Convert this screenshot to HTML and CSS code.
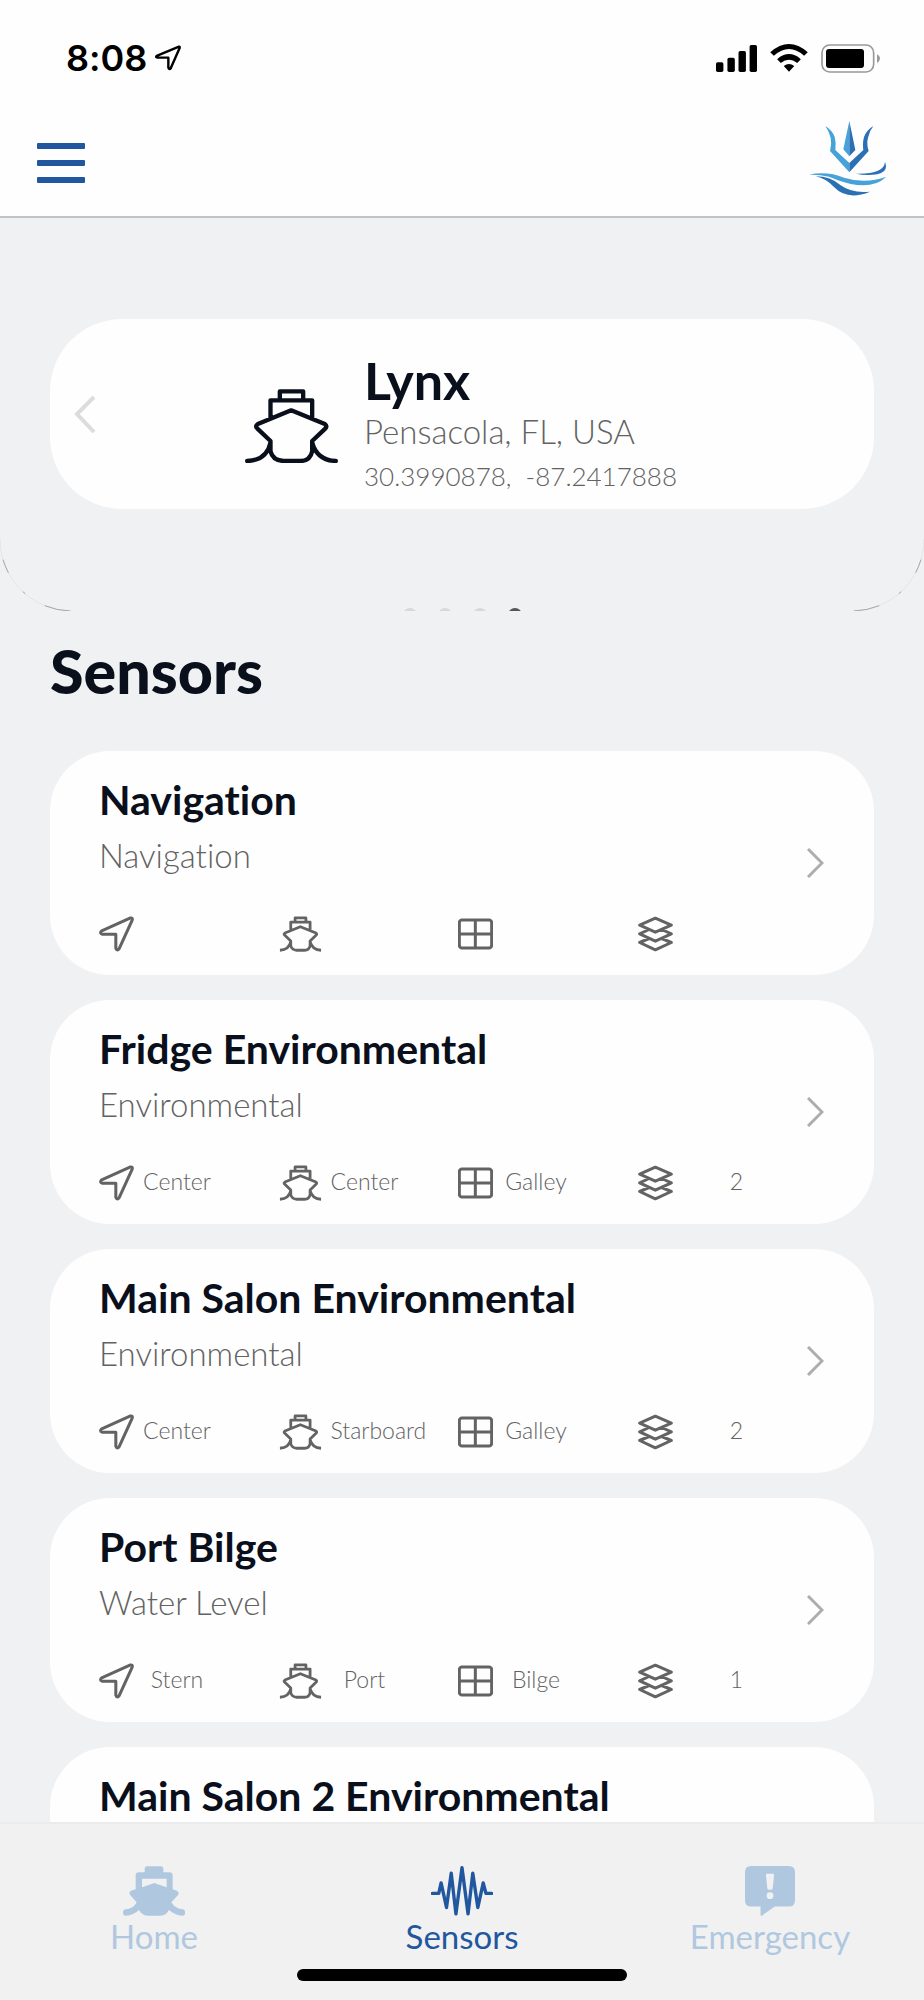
FILE: index.html
```
<!DOCTYPE html>
<html lang="en">
<head>
    <meta charset="UTF-8">
    <meta name="viewport" content="width=device-width, initial-scale=1.0">
    <title>Sensors</title>

    <link rel="stylesheet" href="styles.css">
</head>
<body>
    <!-- Shared icons -->
    <svg class="sprite" aria-hidden="true">
        <symbol id="ship" viewBox="0 0 278 222">
            <path d="M104 30V7H174V30M76 87V34H201V87M138 64L239 105Q247 111 241 118L201 156V187Q195 216 165 216H115Q83 214 76 187V156L36 118Q29 111 38 105ZM76 160Q65 214 6 216M201 160Q215 214 272 216"/>
        </symbol>
        <symbol id="arrow" viewBox="0 0 104 105">
            <path d="M92 5Q102 3 98 13L60 96Q54 105 50 95V53H9Q1 50 8 43Z"/>
        </symbol>
        <symbol id="room" viewBox="0 0 105 92">
            <rect x="4" y="4" width="97" height="84" rx="8"/>
            <path d="M52 4V88M4 46H101"/>
        </symbol>
        <symbol id="layers" viewBox="0 0 105 105">
            <path d="M52 5L100 26L52 47L5 26ZM33 39L5 52L52 74L100 52L71 39M33 66L5 78L52 100L100 78L71 66"/>
        </symbol>
        <symbol id="chevron" viewBox="0 0 17 30">
            <path d="M1 1L15 15L1 29"/>
        </symbol>
    </svg>

    <div class="status-bar">
        <span class="time">8:08</span>
        <svg class="location" viewBox="0 0 76 76"><path d="M70 5L5 32Q1 36 7 37H39V66Q42 74 46 68L72 9Q73 4 70 5Z"/></svg>
        <div class="status-icons">
            <svg width="41" height="27" viewBox="0 0 122 80"><rect y="51" width="22" height="29" rx="5"/><rect x="34" y="38" width="22" height="42" rx="5"/><rect x="67" y="18" width="22" height="62" rx="5"/><rect x="100" width="22" height="80" rx="5"/></svg>
            <svg width="38" height="28" viewBox="0 0 114 85"><path d="M0 25Q57 -25 114 25L103 36Q57 -5 11 36ZM21 46Q57 15 93 46L82 58Q57 37 32 58ZM41 67Q57 55 73 67L57 84Z"/></svg>
            <svg width="59" height="29" viewBox="0 0 177 87"><rect class="battery-case" x="3" y="3" width="155" height="81" rx="23"/><rect x="15" y="15" width="114" height="57" rx="9"/><path class="battery-cap" d="M168 31Q177 35 177 43Q177 52 168 57Z"/></svg>
        </div>
    </div>

    <header>
        <button class="menu-button" aria-label="Menu"><span></span><span></span><span></span></button>
        <svg class="logo" viewBox="0 0 234 225">
            <path class="logo-light" d="M121 0L103 85L121 106ZM49 15Q70 28 77 48Q82 66 79 87L121 126V154L63 90Q69 70 65 50Q60 30 49 15ZM0 161Q55 150 105 170Q170 190 232 167Q195 203 125 189Q85 178 60 167Q30 160 0 161Z"/>
            <path class="logo-dark" d="M121 0L139 87L121 106ZM193 15Q172 28 165 48Q160 66 163 87L121 126V154L179 90Q172 70 177 50Q181 30 193 15ZM20 166Q65 166 95 193Q130 218 183 212Q115 240 75 198Q50 172 20 166ZM141 158Q225 160 228 123Q240 152 205 160Q170 165 141 158Z"/>
        </svg>
    </header>

    <main>
        <section class="carousel">
            <div class="vessel">
                <button class="prev" aria-label="Previous vessel"><svg viewBox="0 0 22 39"><path d="M20 2L3 19L20 37"/></svg></button>
                <svg class="vessel-icon"><use href="#ship"/></svg>
                <div class="vessel-info">
                    <h2>Lynx</h2>
                    <p class="place">Pensacola, FL, USA</p>
                    <p class="coords">30.3990878,&nbsp; -87.2417888</p>
                </div>
            </div>
            <svg class="corner left" viewBox="0 0 72 72"><path class="faint" d="M0 0A72 72 0 0 0 72 72"/><path class="streak" d="M0 0A72 72 0 0 0 72 72"/></svg>
            <svg class="corner right" viewBox="0 0 72 72"><path class="faint" d="M72 0A72 72 0 0 1 0 72"/><path class="streak" d="M72 0A72 72 0 0 1 0 72"/></svg>
            <div class="dots"><span></span><span></span><span></span><span class="active"></span></div>
        </section>

        <h1>Sensors</h1>

        <div class="sensor-list">
            <a class="sensor-card" href="#navigation">
                <div class="sensor-body">
                    <h3>Navigation</h3>
                    <p>Navigation</p>
                    <div class="meta">
                        <div><svg class="icon"><use href="#arrow"/></svg></div>
                        <div><svg class="icon icon-ship"><use href="#ship"/></svg></div>
                        <div><svg class="icon"><use href="#room"/></svg></div>
                        <div><svg class="icon"><use href="#layers"/></svg></div>
                    </div>
                </div>
                <svg class="chevron"><use href="#chevron"/></svg>
            </a>

            <a class="sensor-card" href="#fridge">
                <div class="sensor-body">
                    <h3>Fridge Environmental</h3>
                    <p>Environmental</p>
                    <div class="meta">
                        <div><svg class="icon"><use href="#arrow"/></svg><span>Center</span></div>
                        <div><svg class="icon icon-ship"><use href="#ship"/></svg><span>Center</span></div>
                        <div><svg class="icon"><use href="#room"/></svg><span>Galley</span></div>
                        <div><svg class="icon"><use href="#layers"/></svg><span class="level">2</span></div>
                    </div>
                </div>
                <svg class="chevron"><use href="#chevron"/></svg>
            </a>

            <a class="sensor-card" href="#main-salon">
                <div class="sensor-body">
                    <h3>Main Salon Environmental</h3>
                    <p>Environmental</p>
                    <div class="meta">
                        <div><svg class="icon"><use href="#arrow"/></svg><span>Center</span></div>
                        <div><svg class="icon icon-ship"><use href="#ship"/></svg><span>Starboard</span></div>
                        <div><svg class="icon"><use href="#room"/></svg><span>Galley</span></div>
                        <div><svg class="icon"><use href="#layers"/></svg><span class="level">2</span></div>
                    </div>
                </div>
                <svg class="chevron"><use href="#chevron"/></svg>
            </a>

            <a class="sensor-card" href="#port-bilge">
                <div class="sensor-body">
                    <h3>Port Bilge</h3>
                    <p>Water Level</p>
                    <div class="meta">
                        <div><svg class="icon"><use href="#arrow"/></svg><span>Stern</span></div>
                        <div><svg class="icon icon-ship"><use href="#ship"/></svg><span>Port</span></div>
                        <div><svg class="icon"><use href="#room"/></svg><span>Bilge</span></div>
                        <div><svg class="icon"><use href="#layers"/></svg><span class="level">1</span></div>
                    </div>
                </div>
                <svg class="chevron"><use href="#chevron"/></svg>
            </a>

            <a class="sensor-card" href="#main-salon-2">
                <div class="sensor-body">
                    <h3>Main Salon 2 Environmental</h3>
                </div>
            </a>
        </div>
    </main>

    <footer>
        <nav>
            <a href="#home">
                <svg width="62" height="50" viewBox="0 0 186 148"><path fill-rule="evenodd" d="M73 0H113Q121 0 121 8V18H139Q149 18 149 28V69L162 73Q170 79 165 86L145 108Q156 128 180 129Q186 130 186 136V142Q185 148 179 148Q155 147 138 131Q130 148 112 148H74Q56 147 48 131Q32 147 8 148Q0 148 0 140V136Q1 129 9 129Q32 127 41 108L22 87Q16 78 24 73L38 69V28Q38 18 48 18H65V8Q65 0 73 0ZM57 37V63L94 50L131 63V37Z"/></svg>
                Home
            </a>
            <a href="#sensors" class="active">
                <svg width="62" height="50" viewBox="0 0 184 148"><path class="pulse" d="M4 81H23L30 50L46 123L60 21L74 142L92 5L110 142L124 21L139 123L155 50L163 81H180"/></svg>
                Sensors
            </a>
            <a href="#emergency">
                <svg width="50" height="50" viewBox="0 0 148 148"><path fill-rule="evenodd" d="M18 0H130Q148 0 148 18V102Q148 120 130 120H88L50 147Q46 149 46 144V120H18Q0 120 0 102V18Q0 0 18 0ZM65 23Q62 23 62 27L66 66Q67 70 70 70H78Q81 70 82 66L86 27Q86 23 83 23ZM74 78A10 10 0 1 0 74 98A10 10 0 1 0 74 78Z"/></svg>
                Emergency
            </a>
        </nav>
        <div class="home-indicator"></div>
    </footer>
</body>
</html>
```
FILE: styles.css
```
* {
    box-sizing: border-box;
}

body {
    margin: 0;
    height: 100vh;
    display: flex;
    flex-direction: column;
    background-color: #f0f1f3;
    color: #0a0f1c;
    font-family: Lato, "Liberation Sans", sans-serif;
    font-variant-ligatures: none;
}

h1, h2, h3, p {
    margin: 0;
}

a {
    color: inherit;
    text-decoration: none;
}

button {
    padding: 0;
    border: none;
    background: none;
    cursor: pointer;
}

svg {
    flex: none;
}

.sprite {
    position: absolute;
    width: 0;
    height: 0;
}

/* Phone status bar */
.status-bar {
    display: flex;
    align-items: center;
    flex: none;
    height: 116px;
    padding: 0 44px 0 66px;
    background-color: #fefefe;
    color: #000;
}

.time {
    font-family: Inter, sans-serif;
    font-size: 36px;
    font-weight: 600;
}

.location {
    width: 26px;
    height: 26px;
    margin-left: 8px;
    fill: none;
    stroke: #000;
    stroke-width: 7;
    stroke-linejoin: round;
}

.status-icons {
    display: flex;
    align-items: center;
    gap: 13px;
    margin-left: auto;
}

.battery-case {
    fill: none;
    stroke: #999;
    stroke-width: 5;
}

.battery-cap {
    fill: #999;
}

/* App header */
header {
    display: flex;
    align-items: flex-start;
    justify-content: space-between;
    flex: none;
    height: 102px;
    padding: 5px 37px 0;
    background-color: #fefefe;
    border-bottom: 2px solid #c2c2c4;
}

.menu-button {
    display: flex;
    flex-direction: column;
    gap: 11px;
    width: 48px;
    padding-top: 22px;
}

.menu-button span {
    height: 6px;
    border-radius: 1px;
    background-color: #20579f;
}

.logo {
    width: 78px;
    height: 75px;
}

.logo-light {
    fill: #45a3da;
}

.logo-dark {
    fill: #2b6fb5;
}

main {
    flex: 1;
    min-height: 0;
    overflow-y: auto;
    scrollbar-width: none;
}

/* Vessel carousel */
.carousel {
    position: relative;
    height: 393px;
    padding: 101px 50px 0;
    overflow: hidden;
}

.vessel {
    display: flex;
    align-items: center;
    height: 190px;
    padding: 0 24px;
    border-radius: 72px;
    background-color: #fefefe;
}

.prev svg {
    display: block;
    width: 22px;
    height: 39px;
    fill: none;
    stroke: #dcdcdc;
    stroke-width: 4;
}

.vessel-icon {
    width: 93px;
    height: 74px;
    margin: 24px 26px 0 149px;
    fill: none;
    stroke: #0a0f1c;
    stroke-width: 13;
    stroke-linecap: round;
    stroke-linejoin: round;
}

.vessel-info {
    padding-top: 22px;
    color: #626262;
    font-weight: 300;
}

.vessel-info h2 {
    color: #0a0f1c;
    font-size: 52px;
    line-height: 56px;
    font-weight: 700;
}

.place {
    font-size: 33px;
    line-height: 46px;
}

.coords {
    font-size: 26px;
    line-height: 44px;
}

.corner {
    position: absolute;
    bottom: 0;
    width: 72px;
    height: 72px;
    fill: none;
}

.faint {
    stroke: #e4e5e7;
}

.streak {
    stroke: #a5a6a8;
    stroke-dasharray: 0 21 14 24 3 23 26 10;
}

.left {
    left: 0;
}

.right {
    right: 0;
}

.dots {
    position: absolute;
    right: 0;
    bottom: -11px;
    left: 0;
    display: flex;
    justify-content: center;
    gap: 21px;
}

.dots span {
    width: 14px;
    height: 14px;
    border-radius: 50%;
    background-color: #d8d8da;
}

.dots .active {
    background-color: #555;
}

/* Sensor list */
h1 {
    padding: 25px 50px 45px;
    font-size: 61px;
    line-height: 70px;
    font-weight: 900;
}

.sensor-list {
    display: flex;
    flex-direction: column;
    gap: 25px;
    padding: 0 50px;
}

.sensor-card {
    display: flex;
    align-items: center;
    min-height: 224px;
    padding: 25px 50px 23px 49px;
    border-radius: 60px;
    background-color: #fefefe;
}

.sensor-body {
    flex: 1;
    align-self: flex-start;
}

.sensor-body h3 {
    font-size: 41px;
    line-height: 48px;
    font-weight: 700;
}

.sensor-body p {
    margin: 10px 0 40px;
    color: #626262;
    font-size: 33px;
    line-height: 42px;
    font-weight: 300;
}

.meta {
    display: grid;
    grid-template-columns: repeat(4, 1fr);
    margin-right: -10px;
    color: #626262;
    font-size: 23px;
    line-height: 32px;
    font-weight: 300;
}

.meta div {
    display: flex;
    align-items: flex-start;
    gap: 9px;
    min-width: 0;
}

.meta span {
    min-width: 68px;
    text-align: center;
}

.meta .level {
    min-width: 110px;
}

.icon {
    width: 35px;
    height: 36px;
    fill: none;
    stroke: #636363;
    stroke-width: 9;
    stroke-linejoin: round;
}

.icon-ship {
    width: 43px;
    stroke-width: 18;
}

.chevron {
    width: 17px;
    height: 30px;
    margin-bottom: 2px;
    fill: none;
    stroke: #adadad;
    stroke-width: 3;
}

/* Bottom tabs */
footer {
    flex: none;
    height: 178px;
    border-top: 2px solid #ebebec;
    background-color: #f1f1f1;
}

footer nav {
    display: grid;
    grid-template-columns: repeat(3, 1fr);
    padding-top: 42px;
}

footer a {
    display: flex;
    flex-direction: column;
    align-items: center;
    color: #b0c8df;
    fill: #b0c8df;
    font-size: 33px;
    line-height: 40px;
}

footer .active {
    color: #20579f;
}

.pulse {
    fill: none;
    stroke: #20579f;
    stroke-width: 10;
    stroke-linecap: round;
    stroke-linejoin: round;
}

.home-indicator {
    width: 330px;
    height: 12px;
    margin: 13px auto 0;
    border-radius: 6px;
    background-color: #000;
}
```
